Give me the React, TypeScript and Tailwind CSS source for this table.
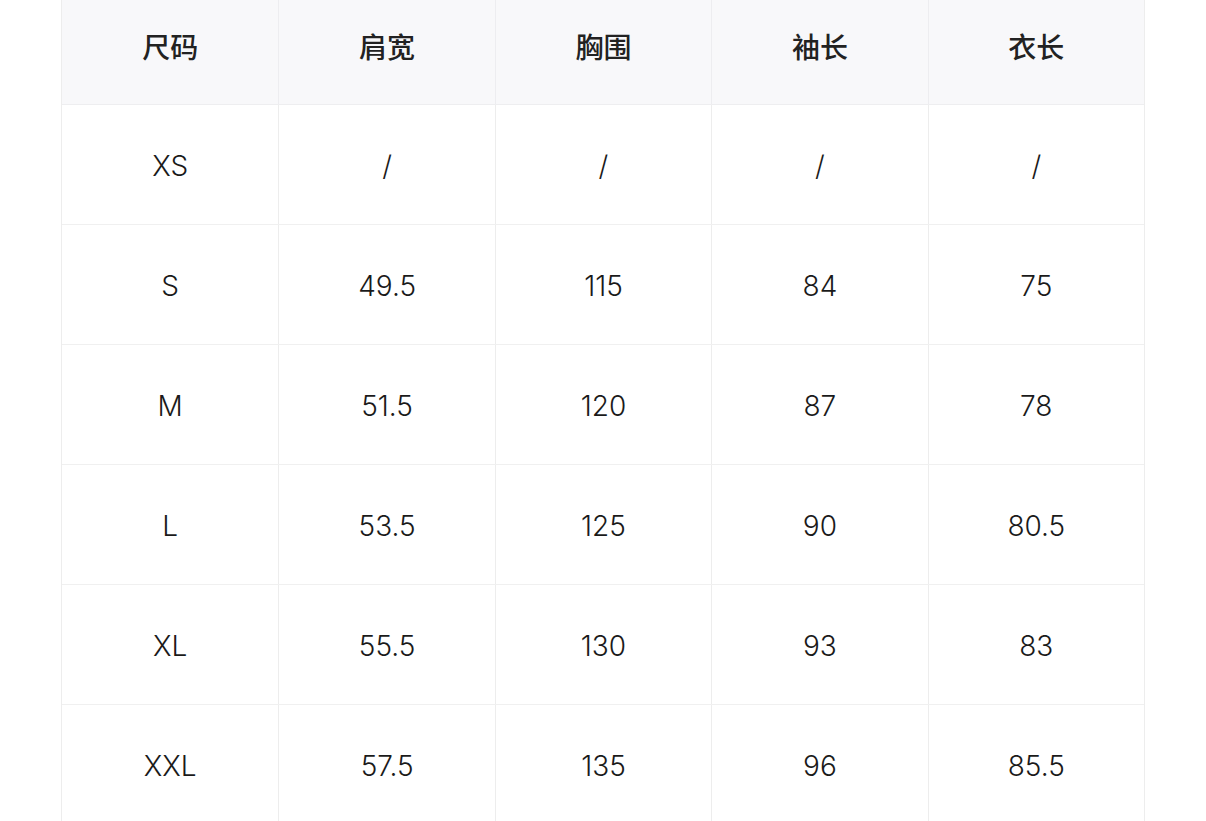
import React from "react";

const headers = ["尺码", "肩宽", "胸围", "袖长", "衣长"];
const rows = [
  ["XS", "/", "/", "/", "/"],
  ["S", "49.5", "115", "84", "75"],
  ["M", "51.5", "120", "87", "78"],
  ["L", "53.5", "125", "90", "80.5"],
  ["XL", "55.5", "130", "93", "83"],
  ["XXL", "57.5", "135", "96", "85.5"],
];

export default function App() {
  return (
    <div
      className="w-[1206px] h-[821px] bg-white overflow-hidden"
      style={{ fontFamily: 'Inter, "Noto Sans CJK SC", sans-serif' }}
    >
      <div className="ml-[61px] w-[1084px] border-x border-[#ededed]">
        <div className="grid grid-cols-5 h-[105px] bg-[#f8f8fa] border-b border-[#eeeef0]">
          {headers.map((h, i) => (
            <div
              key={h}
              className={`flex items-center justify-center pb-[12px] text-[28px] font-medium text-[#222] ${i > 0 ? "border-l border-[#ededf0]" : ""}`}
              style={{ fontFamily: '"Noto Sans CJK SC", sans-serif' }}
            >
              {h}
            </div>
          ))}
        </div>
        {rows.map((r, ri) => (
          <div key={ri} className="grid grid-cols-5 h-[120px] border-b border-[#f0f0f0]">
            {r.map((c, i) => (
              <div
                key={i}
                className={`flex items-center justify-center pt-[2px] text-[28px] font-light text-[#1a1a1a] ${i > 0 ? "border-l border-[#ededed]" : ""}`}
              >
                {c}
              </div>
            ))}
          </div>
        ))}
      </div>
    </div>
  );
}
